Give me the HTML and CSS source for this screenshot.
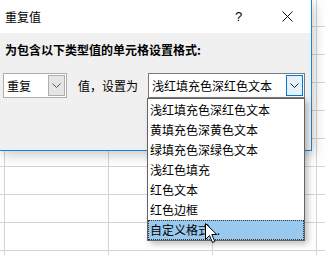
FILE: index.html
```html
<!DOCTYPE html>
<html lang="zh-CN">
<head>
  <meta charset="UTF-8" />
  <title>重复值</title>
  <link rel="stylesheet" href="styles.css">
</head>
<body>
  <div class="dialog">
    <div class="titlebar">
      <span class="title">重复值</span>
      <span class="help">?</span>
      <svg class="close" width="11" height="11" viewBox="0 0 11 11">
        <path d="M0.5 0.5 L10.5 10.5 M10.5 0.5 L0.5 10.5" stroke="#111" stroke-width="1" fill="none" />
      </svg>
    </div>

    <div class="content">
      <div class="caption">为包含以下类型值的单元格设置格式:</div>

      <div class="row">
        <div class="select small">
          <span class="value">重复</span>
          <span class="btn">
            <svg width="9" height="5" viewBox="0 0 9 5"><polyline points="0.5,0.5 4.5,4.5 8.5,0.5" stroke="#555" fill="none" /></svg>
          </span>
        </div>
        <span class="text">值，设置为</span>
        <div class="select combo">
          <span class="value">浅红填充色深红色文本</span>
          <span class="btn focus">
            <svg width="9" height="5" viewBox="0 0 9 5"><polyline points="0.5,0.5 4.5,4.5 8.5,0.5" stroke="#222" fill="none" /></svg>
          </span>
        </div>
      </div>
    </div>

    <ul class="list">
      <li>浅红填充色深红色文本</li>
      <li>黄填充色深黄色文本</li>
      <li>绿填充色深绿色文本</li>
      <li>浅红色填充</li>
      <li>红色文本</li>
      <li>红色边框</li>
      <li class="active">自定义格式...</li>
    </ul>
  </div>

  <!-- mouse pointer -->
  <svg class="cursor" width="13" height="21" viewBox="0 0 13 21">
    <path d="M0.5 0.5 L0.5 16.5 L4.5 12.5 L7.5 19.5 L9.8 18.5 L6.8 11.5 L11.8 11.5 Z" fill="#fff" stroke="#000" stroke-width="1" stroke-linejoin="miter" />
  </svg>
</body>
</html>
```

FILE: styles.css
```css
html, body {
  margin: 0;
  padding: 0;
}
body {
  width: 325px;
  height: 255px;
  overflow: hidden;
  position: relative;
  font-family: "Noto Sans CJK SC", "Noto Sans", sans-serif;
  font-size: 12px;
  color: #000;
  background-color: #fff;
  background-image:
    linear-gradient(to right, #d4d4d4 1px, transparent 1px),
    linear-gradient(to bottom, #d4d4d4 1px, transparent 1px);
  background-size: 104px 28px;
  background-position: 4px 26px;
}

.dialog {
  position: relative;
  width: 311px;
  height: 150px;
  background: #f0f0f0;
  border-right: 1px solid #1883d7;
  border-bottom: 1px solid #1883d7;
  box-shadow: 2px 4px 12px rgba(0, 0, 0, 0.22);
}

.titlebar {
  height: 33px;
  background: #fff;
  display: flex;
  align-items: center;
  padding-left: 5px;
}
.title {
  flex: 1;
  line-height: 16px;
  margin-top: 1px;
}
.help {
  font-family: "Liberation Sans", sans-serif;
  font-size: 13px;
  width: 45px;
  margin-right: 2px;
}
.close {
  margin-right: 18px;
}

.content {
  padding: 9px 0 0 5px;
}
.caption {
  font-weight: bold;
  line-height: 16px;
}

.row {
  display: flex;
  align-items: center;
  margin-top: 15px;
  margin-left: -2px;
}
.select {
  box-sizing: border-box;
  height: 25px;
  background: #fff;
  display: flex;
  align-items: center;
}
.select .value {
  flex: 1;
  padding-left: 3px;
  white-space: nowrap;
}
.select.small {
  width: 64px;
  border: 1px solid #adadad;
}
.select.small .btn {
  box-sizing: border-box;
  width: 17px;
  height: 21px;
  margin-right: 1px;
  background: #e5e5e5;
  border: 1px solid #adadad;
}
.select.combo {
  width: 157px;
  border: 1px solid #7a7a7a;
  margin-left: 0;
}
.select.combo .btn {
  box-sizing: border-box;
  width: 17px;
  height: 21px;
  margin-right: 1px;
  background: #e5f1fb;
  border: 1px solid #0078d7;
}
.btn {
  display: flex;
  align-items: center;
  justify-content: center;
}
.text {
  margin-left: 11px;
  width: 70px;
}

.list {
  position: absolute;
  left: 147px;
  top: 98px;
  width: 158px;
  box-sizing: border-box;
  margin: 0;
  padding: 1px 0 0;
  list-style: none;
  background: #fff;
  border: 1px solid #646464;
  box-shadow: 3px 3px 6px rgba(0, 0, 0, 0.25);
}
.list li {
  box-sizing: border-box;
  height: 20px;
  line-height: 20px;
  padding-left: 2px;
  white-space: nowrap;
}
.list li.active {
  background: #99c9ef;
  outline: 1px dotted #333;
  outline-offset: -1px;
}

.cursor {
  position: absolute;
  left: 205px;
  top: 223px;
}
```
